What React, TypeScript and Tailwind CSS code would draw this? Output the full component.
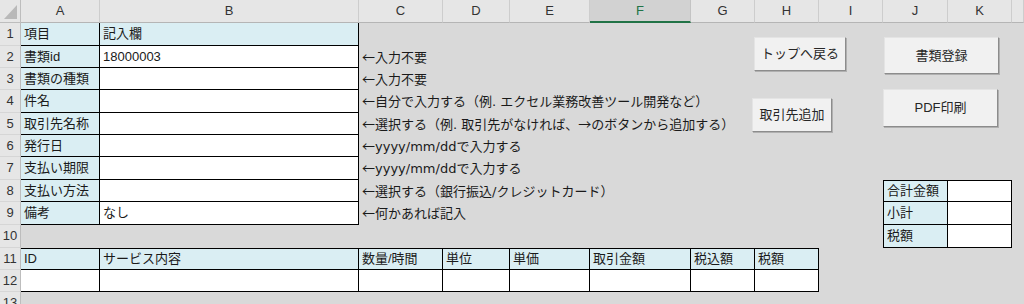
import React from "react";

const COLS = ["A", "B", "C", "D", "E", "F", "G", "H", "I", "J", "K", ""];

const VALUES: Record<string, string> = {
  A1: "項目",
  B1: "記入欄",
  A2: "書類id",
  B2: "18000003",
  A3: "書類の種類",
  A4: "件名",
  A5: "取引先名称",
  A6: "発行日",
  A7: "支払い期限",
  A8: "支払い方法",
  A9: "備考",
  B9: "なし",
  C2: "←入力不要",
  C3: "←入力不要",
  C4: "←自分で入力する（例. エクセル業務改善ツール開発など）",
  C5: "←選択する（例. 取引先がなければ、→のボタンから追加する）",
  C6: "←yyyy/mm/ddで入力する",
  C7: "←yyyy/mm/ddで入力する",
  C8: "←選択する（銀行振込/クレジットカード）",
  C9: "←何かあれば記入",
  J8: "合計金額",
  J9: "小計",
  J10: "税額",
  A11: "ID",
  B11: "サービス内容",
  C11: "数量/時間",
  D11: "単位",
  E11: "単価",
  F11: "取引金額",
  G11: "税込額",
  H11: "税額",
};

type Box = { r0: number; r1: number; c0: number; c1: number };

const TABLES: Box[] = [
  { r0: 1, r1: 9, c0: 0, c1: 1 },
  { r0: 8, r1: 10, c0: 9, c1: 10 },
  { r0: 11, r1: 12, c0: 0, c1: 7 },
];

function isBlue(r: number, c: number) {
  if (r >= 1 && r <= 9 && (c === 0 || r === 1)) return true;
  if (r >= 8 && r <= 10 && c === 9) return true;
  if (r === 11 && c <= 7) return true;
  return false;
}

// arrows look wide in the sheet, so draw them with the CJK font
function withArrows(text: string) {
  return text.split(/([←→])/).map((part, i) =>
    part === "←" || part === "→" ? (
      <span key={i} className="font-['Noto_Sans_CJK_JP',sans-serif]">
        {part}
      </span>
    ) : (
      part
    )
  );
}

function Cell({ r, c }: { r: number; c: number }) {
  const key = COLS[c] + r;
  const text = VALUES[key];
  const t = TABLES.find((b) => r >= b.r0 && r <= b.r1 && c >= b.c0 && c <= b.c1);

  let cls = "flex items-center px-[3px] whitespace-nowrap overflow-visible";
  if (t) {
    cls += " border-b border-r border-black";
    cls += isBlue(r, c) ? " bg-[#daeef3]" : " bg-white";
    if (r === t.r0 && r !== 1) cls += " border-t";
    if (c === t.c0 && c !== 0) cls += " border-l";
  }
  // the notes column uses a wider latin face
  if (!t && c === 2) cls += " font-['DejaVu_Sans','Noto_Sans_CJK_JP',sans-serif]";

  return (
    <div className={cls}>
      {text && <span className="relative">{withArrows(text)}</span>}
    </div>
  );
}

function Button({ className, label }: { className: string; label: string }) {
  return (
    <div
      className={
        "absolute flex items-center justify-center bg-[#f1f1f1] border border-t-[#e4e4e4] border-l-[#e4e4e4] border-r-[#8c8c8c] border-b-[#8c8c8c] shadow-[1px_1px_0_#b0b0b0] text-[13px] text-[#262626] " +
        className
      }
    >
      {label}
    </div>
  );
}

export default function App() {
  const rows = Array.from({ length: 13 }, (_, i) => i + 1);

  return (
    <div
      className="relative w-[1024px] h-[304px] overflow-hidden bg-[#d9d9d9] text-[13px] text-[#1a1a1a]"
      style={{ fontFamily: '"Liberation Sans", "Noto Sans CJK JP", sans-serif' }}
    >
      <div className="grid grid-cols-[21px_79px_259px_84px_67px_80px_101px_64px_64px_64px_65px_64px_1fr] grid-rows-[23px_23px_22px_22px_23px_22px_22px_23px_22px_23px_23px_22px_22px_22px]">
        {/* column headers */}
        <div className="relative bg-[#e6e6e6] border-r border-b border-[#bdbdbd]">
          <svg className="absolute right-[3px] bottom-[3px]" width="13" height="14" viewBox="0 0 13 14">
            <polygon points="13,0 13,14 0,14" fill="#b9b9b9" />
          </svg>
        </div>
        {COLS.map((name, c) =>
          c === 5 ? (
            <div
              key={c}
              className="flex items-center justify-center bg-[#d2d2d2] border-r border-[#c4c4c4] border-b-2 border-b-[#217346] text-[#217346]"
            >
              {name}
            </div>
          ) : (
            <div
              key={c}
              className="flex items-center justify-center bg-[#e6e6e6] border-r border-b border-r-[#cdcdcd] border-b-[#b5b5b5] text-[#333]"
            >
              {name}
            </div>
          )
        )}

        {rows.map((r) => (
          <React.Fragment key={r}>
            <div className="flex items-center justify-center bg-[#e6e6e6] border-r border-b border-r-[#bdbdbd] border-b-[#d6d6d6] text-[#333]">
              {r}
            </div>
            {COLS.map((_, c) => (
              <Cell key={c} r={r} c={c} />
            ))}
          </React.Fragment>
        ))}
      </div>

      <Button className="left-[754px] top-[37px] w-[92px] h-[34px]" label="トップへ戻る" />
      <Button className="left-[752px] top-[98px] w-[80px] h-[34px]" label="取引先追加" />
      <Button className="left-[884px] top-[37px] w-[115px] h-[37px]" label="書類登録" />
      <Button className="left-[883px] top-[89px] w-[115px] h-[38px]" label="PDF印刷" />
    </div>
  );
}
